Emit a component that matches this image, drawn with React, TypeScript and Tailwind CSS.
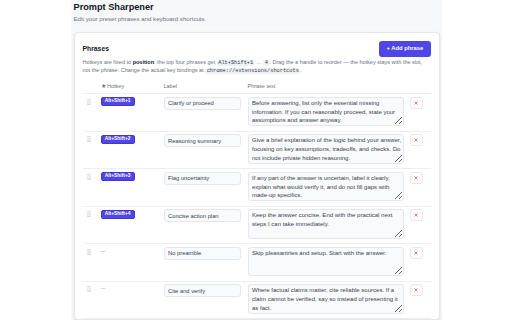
import { Fragment } from "react";

type Phrase = {
  hotkey: string | null;
  label: string;
  text: string;
};

const phrases: Phrase[] = [
  {
    hotkey: "Alt+Shift+1",
    label: "Clarify or proceed",
    text: "Before answering, list only the essential missing information. If you can reasonably proceed, state your assumptions and answer anyway.",
  },
  {
    hotkey: "Alt+Shift+2",
    label: "Reasoning summary",
    text: "Give a brief explanation of the logic behind your answer, focusing on key assumptions, tradeoffs, and checks. Do not include private hidden reasoning.",
  },
  {
    hotkey: "Alt+Shift+3",
    label: "Flag uncertainty",
    text: "If any part of the answer is uncertain, label it clearly, explain what would verify it, and do not fill gaps with made-up specifics.",
  },
  {
    hotkey: "Alt+Shift+4",
    label: "Concise action plan",
    text: "Keep the answer concise. End with the practical next steps I can take immediately.",
  },
  {
    hotkey: null,
    label: "No preamble",
    text: "Skip pleasantries and setup. Start with the answer.",
  },
  {
    hotkey: null,
    label: "Cite and verify",
    text: "Where factual claims matter, cite reliable sources. If a claim cannot be verified, say so instead of presenting it as fact.",
  },
];

const Code = ({ children }: { children: string }) => (
  <code className="rounded-[2px] bg-[#eef0f3] px-[1.5px] font-['Liberation_Mono',monospace] text-[5.3px] leading-none text-[#374151]">
    {children}
  </code>
);

const Handle = () => (
  <svg width="4" height="6" viewBox="0 0 4 6" className="fill-[#9ca3af]">
    <circle cx="1" cy="0.8" r="0.6" />
    <circle cx="3" cy="0.8" r="0.6" />
    <circle cx="1" cy="3" r="0.6" />
    <circle cx="3" cy="3" r="0.6" />
    <circle cx="1" cy="5.2" r="0.6" />
    <circle cx="3" cy="5.2" r="0.6" />
  </svg>
);

const App = () => {
  return (
    <div className="flex min-h-[320px] justify-center bg-white font-['Liberation_Sans',Arial,sans-serif]">
      <div className="min-h-[320px] w-[371px] bg-[#f7f8fa] px-[3px] pt-[2px]">
        {/* Page title */}
        <h1 className="text-[9.2px] font-bold leading-[10px] text-[#111827]">Prompt Sharpener</h1>
        <p className="mt-[2.8px] text-[6.1px] leading-[8px] text-[#6b7280]">
          Edit your preset phrases and keyboard shortcuts.
        </p>

        {/* Phrases card */}
        <div className="mt-[9.2px] w-[366px] rounded-[4px] border border-[#e5e7eb] bg-white px-[8px] pt-[7.7px] shadow-sm">
          <div className="flex items-center justify-between">
            <h2 className="text-[6.8px] font-bold text-[#111827]">Phrases</h2>
            <button className="h-[16px] rounded-[3px] bg-[#4f46e5] px-[7.3px] text-[5.8px] font-bold text-white">
              + Add phrase
            </button>
          </div>

          <p className="mt-[1.4px] text-[5.5px] leading-[8.3px] text-[#6b7280]">
            Hotkeys are fixed to <b className="text-[#111827]">position</b>: the top four phrases get{" "}
            <Code>Alt+Shift+1</Code> … <Code>4</Code>. Drag the ≡ handle to reorder — the hotkey stays with
            the slot, not the phrase. Change the actual key bindings at{" "}
            <Code>chrome://extensions/shortcuts</Code>.
          </p>

          {/* Table */}
          <div className="mt-[8.6px]">
            <div className="grid grid-cols-[18px_63px_84px_162px_21px] border-b border-[#eceef1] pb-[3.6px] text-[5.5px] leading-[6.5px] font-medium text-[#6b7280]">
              <span />
              <span>★ Hotkey</span>
              <span>Label</span>
              <span>Phrase text</span>
              <span />
            </div>

            {phrases.map((p, i) => (
              <Fragment key={i}>
                <div className="grid grid-cols-[18px_63px_84px_162px_21px] items-start border-b border-[#eceef1] pt-[2.3px] pb-[4.6px] leading-none">
                  <div className="flex pt-[2.3px] pl-[4.7px]">
                    <Handle />
                  </div>
                  <div className="flex">
                    {p.hotkey ? (
                      <span className="mt-[0.7px] flex h-[9px] items-center rounded-[2px] border border-[#4338ca] bg-[#4f46e5] px-[3.2px] text-[4.9px] font-bold text-white">
                        {p.hotkey}
                      </span>
                    ) : (
                      <span className="text-[5px] leading-[9px] text-[#9ca3af]">—</span>
                    )}
                  </div>
                  <div className="flex">
                    <input
                      defaultValue={p.label}
                      className="block h-[13.3px] w-[77px] rounded-[3px] border border-[#e5e7eb] bg-[#f9fafb] px-[3.5px] text-[5.8px] text-[#374151] outline-none"
                    />
                  </div>
                  <div className="flex">
                    <textarea
                      defaultValue={p.text}
                      className="block h-[29.6px] w-[156px] rounded-[3px] border border-[#e5e7eb] bg-[#f9fafb] pt-[1.2px] pr-[1px] pl-[3.5px] text-[6px] leading-[8.8px] text-[#374151] outline-none"
                    />
                  </div>
                  <div className="flex">
                    <button className="flex h-[12px] w-[13.6px] items-center justify-center rounded-[3px] border border-[#e5e7eb] bg-white">
                      <svg width="4" height="4" viewBox="0 0 4 4" className="stroke-[#ef4444]" strokeWidth="0.7">
                        <path d="M0.5 0.5L3.5 3.5M3.5 0.5L0.5 3.5" />
                      </svg>
                    </button>
                  </div>
                </div>
              </Fragment>
            ))}
          </div>
        </div>
      </div>
    </div>
  );
};

export default App;
